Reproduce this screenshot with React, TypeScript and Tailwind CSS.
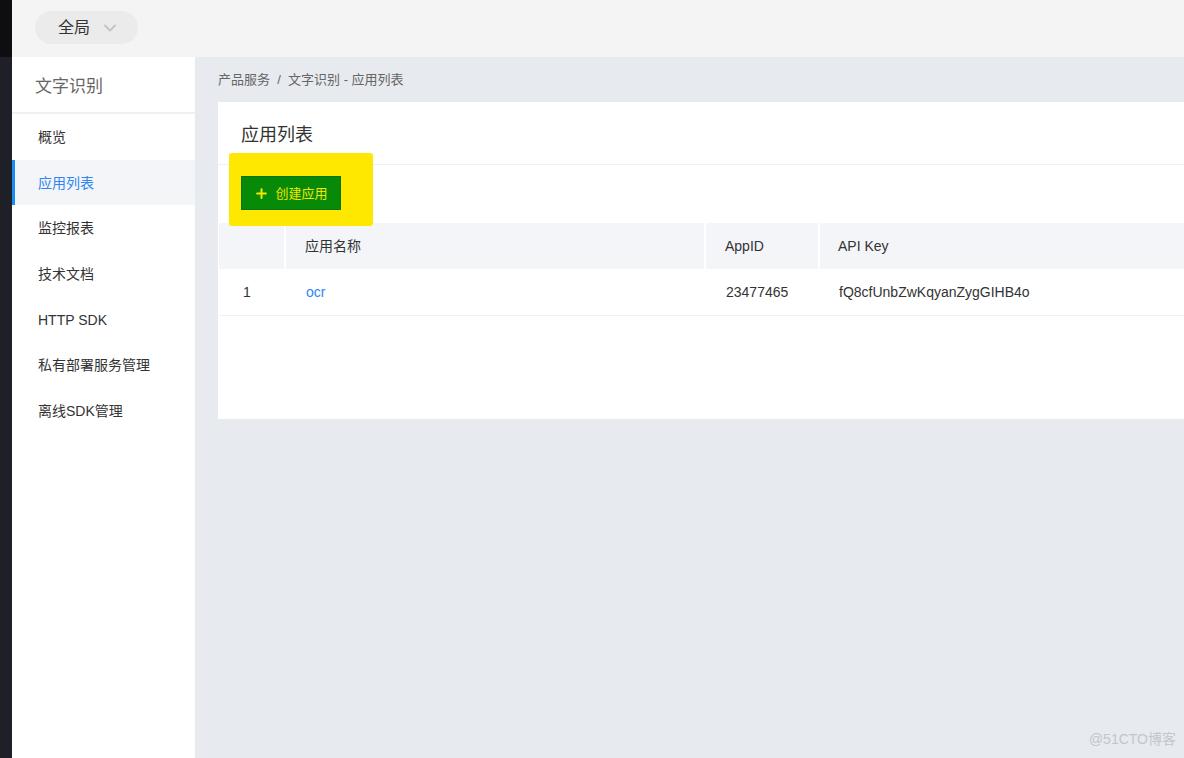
import { ChevronDown, Plus } from "lucide-react";

const menu = ["概览", "应用列表", "监控报表", "技术文档", "HTTP SDK", "私有部署服务管理", "离线SDK管理"];

const App = () => {
  return (
    <div
      className="relative flex h-[758px] w-[1184px] overflow-hidden text-[#333]"
      style={{ fontFamily: '"Liberation Sans", Arial, "Noto Sans CJK SC", sans-serif' }}
    >
      {/* dark edge */}
      <div className="flex w-3 flex-col">
        <div className="h-[57px] bg-[#0e0e10]"></div>
        <div className="flex-1 bg-[#1e1f27]"></div>
      </div>

      <div className="flex flex-1 flex-col">
        {/* top bar */}
        <div className="h-[57px] bg-[#f4f4f4] pl-[23px] pt-[11px]">
          <div className="flex h-[33px] w-[103px] items-center gap-2.5 rounded-full bg-[#ebebeb] pl-[23px] text-base text-[#333]">
            全局
            <ChevronDown size={20} strokeWidth={2.2} className="text-[#c4c4c4]" />
          </div>
        </div>

        <div className="flex flex-1">
          {/* sidebar */}
          <div className="w-[183px] bg-white">
            <div className="flex h-[57px] items-center border-b-2 border-[#eef0f3] pl-[23px] pt-1 text-[17px] text-[#666]">
              文字识别
            </div>
            {menu.map((m) =>
              m === "应用列表" ? (
                <div
                  key={m}
                  className="flex h-[45.7px] items-center border-l-[3px] border-[#1c8cf5] bg-[#f3f5f9] pl-[23px] text-sm text-[#2e86f2]"
                >
                  {m}
                </div>
              ) : (
                <div key={m} className="flex h-[45.7px] items-center pl-[26px] text-sm text-[#333]">
                  {m}
                </div>
              )
            )}
          </div>

          {/* main */}
          <div className="flex flex-1 flex-col bg-[#e7eaef] pl-[23px]">
            <div className="flex h-[45px] items-center text-[13px] text-[#666]">
              产品服务&nbsp;&nbsp;/&nbsp;&nbsp;文字识别 - 应用列表
            </div>

            <div className="h-[317px] bg-white">
              <div className="flex h-[63px] items-center border-b border-[#eef0f3] pl-[23px] pt-1 text-lg text-[#333]">
                应用列表
              </div>

              <div className="relative h-[58px] pl-[23px] pt-[11px]">
                {/* highlighter mark */}
                <div className="absolute left-[11px] top-[-12px] h-[73px] w-[144px] rounded-[3px] bg-[#ffe800]"></div>
                <button className="relative flex h-[34px] w-[100px] items-center justify-center gap-1.5 border border-[#067406] bg-[#078a07] pt-px text-[13px] text-[#f3e600]">
                  <Plus size={15} strokeWidth={3.2} className="text-[#f3e600]" />
                  创建应用
                </button>
              </div>

              <div className="ml-px text-sm">
                <div className="flex h-[46px] items-center bg-[#f4f5f9] text-[#333]">
                  <div className="h-full w-[67px] border-r-2 border-white"></div>
                  <div className="flex h-full w-[420px] items-center border-r-2 border-white pl-[19px]">应用名称</div>
                  <div className="flex h-full w-[114px] items-center border-r-2 border-white pl-[19px]">AppID</div>
                  <div className="flex h-full flex-1 items-center pl-[18px]">API Key</div>
                </div>
                <div className="flex h-[47px] items-center border-b border-[#eef0f3] text-[#333]">
                  <div className="w-[67px] pl-6">1</div>
                  <div className="w-[420px] pl-5 text-[#2e86f2]">ocr</div>
                  <div className="w-[114px] pl-5">23477465</div>
                  <div className="flex-1 pl-[19px]">fQ8cfUnbZwKqyanZygGIHB4o</div>
                </div>
              </div>
            </div>
          </div>
        </div>
      </div>

      <div className="absolute bottom-[8px] right-[8px] text-[14px] text-[#c3c6cc]">@51CTO博客</div>
    </div>
  );
};

export default App;
